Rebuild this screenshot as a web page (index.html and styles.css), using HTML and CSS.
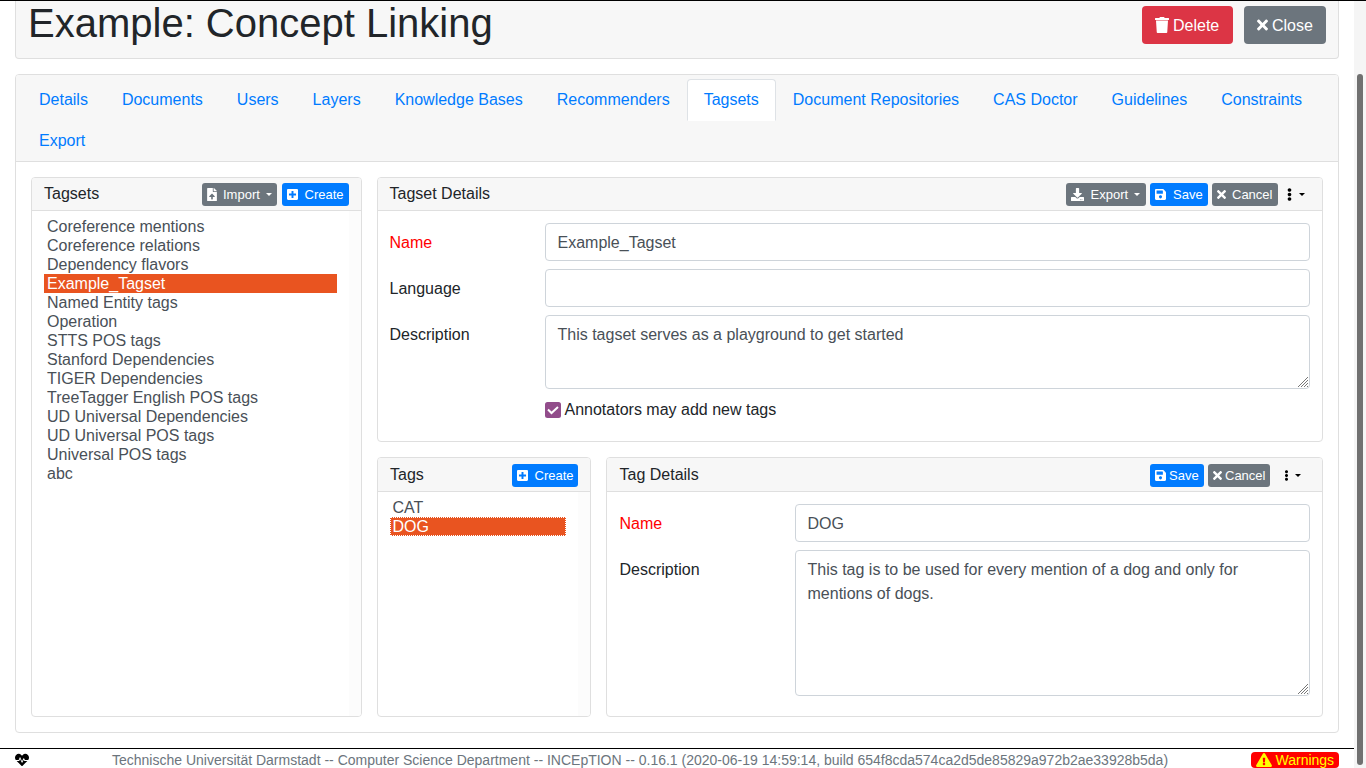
FILE: index.html
```html
<!DOCTYPE html>
<html lang="en">
<head>
<meta charset="utf-8">
<title>Example: Concept Linking</title>
<link rel="stylesheet" href="styles.css">
</head>
<body>
<svg class="sprite" aria-hidden="true">
  <symbol id="trash" viewBox="0 0 448 512"><path d="M432 32H312l-9.400-18.700A24 24 0 0 0 281.100 0H166.800a23.720 23.720 0 0 0-21.400 13.300L136 32H16A16 16 0 0 0 0 48v32a16 16 0 0 0 16 16h416a16 16 0 0 0 16-16V48a16 16 0 0 0-16-16zM32 112l24 376a26 26 0 0 0 26 24h284a26 26 0 0 0 26-24l24-376z"/></symbol>
  <symbol id="times" viewBox="0 0 352 512"><path d="M242.720 256l100.070-100.070c12.280-12.280 12.280-32.190 0-44.480l-22.240-22.240c-12.280-12.280-32.190-12.280-44.480 0L176 189.280 75.930 89.210c-12.280-12.280-32.190-12.280-44.480 0L9.210 111.450c-12.280 12.280-12.280 32.190 0 44.480L109.280 256 9.210 356.070c-12.280 12.280-12.280 32.190 0 44.480l22.240 22.240c12.280 12.280 32.200 12.280 44.480 0L176 322.720l100.070 100.070c12.280 12.280 32.200 12.280 44.480 0l22.240-22.240c12.280-12.280 12.280-32.190 0-44.480L242.720 256z"/></symbol>
  <symbol id="upload" viewBox="0 0 384 512"><path d="M224 136V0H24C10.700 0 0 10.700 0 24v464c0 13.300 10.700 24 24 24h336c13.300 0 24-10.700 24-24V160H248c-13.200 0-24-10.800-24-24zm65.180 216H224v80c0 8.840-7.160 16-16 16h-32c-8.840 0-16-7.160-16-16v-80H94.820c-14.280 0-21.410-17.290-11.270-27.360l96.420-95.700c6.650-6.610 17.390-6.610 24.040 0l96.420 95.700c10.150 10.070 3.030 27.360-11.250 27.360zM377 105L279.100 7c-4.500-4.500-10.600-7-17-7H256v128h128v-6.100c0-6.300-2.500-12.400-7-16.900z"/></symbol>
  <symbol id="plus" viewBox="0 0 448 512"><path d="M400 32H48C21.500 32 0 53.500 0 80v352c0 26.500 21.500 48 48 48h352c26.500 0 48-21.500 48-48V80c0-26.500-21.500-48-48-48zm-32 252c0 6.600-5.400 12-12 12h-92v92c0 6.600-5.400 12-12 12h-56c-6.600 0-12-5.400-12-12v-92H92c-6.600 0-12-5.400-12-12v-56c0-6.600 5.400-12 12-12h92v-92c0-6.600 5.400-12 12-12h56c6.600 0 12 5.400 12 12v92h92c6.600 0 12 5.400 12 12v56z"/></symbol>
  <symbol id="download" viewBox="0 0 512 512"><path d="M216 0h80c13.300 0 24 10.700 24 24v168h87.700c17.800 0 26.700 21.500 14.100 34.100L269.700 378.300c-7.500 7.500-19.800 7.500-27.300 0L90.100 226.100c-12.600-12.600-3.700-34.100 14.100-34.100H192V24c0-13.300 10.700-24 24-24zm296 376v112c0 13.300-10.700 24-24 24H24c-13.300 0-24-10.700-24-24V376c0-13.300 10.700-24 24-24h146.700l49 49c20.100 20.100 52.500 20.100 72.600 0l49-49H488c13.300 0 24 10.700 24 24zm-124 88c0-11-9-20-20-20s-20 9-20 20 9 20 20 20 20-9 20-20zm64 0c0-11-9-20-20-20s-20 9-20 20 9 20 20 20 20-9 20-20z"/></symbol>
  <symbol id="save" viewBox="0 0 448 512"><path d="M433.941 129.941l-83.882-83.882A48 48 0 0 0 316.118 32H48C21.490 32 0 53.490 0 80v352c0 26.510 21.490 48 48 48h352c26.510 0 48-21.490 48-48V163.882a48 48 0 0 0-14.059-33.941zM224 416c-35.346 0-64-28.654-64-64 0-35.346 28.654-64 64-64s64 28.654 64 64c0 35.346-28.654 64-64 64zm96-304.520V212c0 6.627-5.373 12-12 12H76c-6.627 0-12-5.373-12-12V108c0-6.627 5.373-12 12-12h228.520c3.183 0 6.235 1.264 8.485 3.515l3.480 3.480A11.996 11.996 0 0 1 320 111.480z"/></symbol>
  <symbol id="dots" viewBox="0 0 192 512"><path d="M96 184c39.800 0 72 32.200 72 72s-32.200 72-72 72-72-32.200-72-72 32.200-72 72-72zM24 80c0 39.800 32.200 72 72 72s72-32.200 72-72S135.800 8 96 8 24 40.200 24 80zm0 352c0 39.800 32.200 72 72 72s72-32.200 72-72-32.200-72-72-72-72 32.200-72 72z"/></symbol>
  <symbol id="heart" viewBox="0 0 512 512"><path d="M320.200 243.800l-49.700 99.400c-6 12.100-23.400 11.700-28.900-.6l-56.900-126.300-30 71.700H60.600l182.500 186.500c7.100 7.300 18.600 7.300 25.700 0L451.400 288H342.300l-22.100-44.200zM473.700 73.900l-2.400-2.500c-51.500-52.600-135.800-52.600-187.400 0L256 100l-27.900-28.500c-51.500-52.700-135.900-52.700-187.400 0l-2.400 2.400C-10.400 123.700-12.500 203 31 256h102.400l35.900-86.200c5.400-12.900 23.600-13.200 29.400-.4l58.200 129.300 49-97.900c5.900-11.800 22.700-11.800 28.600 0l27.600 55.200H481c43.500-53 41.400-132.300-7.300-182.100z"/></symbol>
  <symbol id="warn" viewBox="0 0 576 512"><path d="M569.517 440.013C587.975 472.007 564.806 512 527.940 512H48.054c-36.937 0-59.999-40.055-41.577-71.987L246.423 23.985c18.467-32.009 64.720-31.951 83.154 0l239.940 416.028zM288 354c-25.405 0-46 20.595-46 46s20.595 46 46 46 46-20.595 46-46-20.595-46-46-46zm-43.673-165.346l7.418 136c.347 6.364 5.609 11.346 11.982 11.346h48.546c6.373 0 11.635-4.982 11.982-11.346l7.418-136c.375-6.874-5.098-12.654-11.982-12.654h-63.383c-6.884 0-12.356 5.780-11.981 12.654z"/></symbol>
</svg>
<div class="window">
  <div class="page">
    <header class="title-bar">
      <h1>Example: Concept Linking</h1>
      <button class="btn danger"><svg class="i-trash"><use href="#trash"/></svg>Delete</button>
      <button class="btn gray close"><svg class="i-times"><use href="#times"/></svg>Close</button>
    </header>
    <main class="project">
      <nav class="tabs">
        <a>Details</a><a>Documents</a><a>Users</a><a>Layers</a><a>Knowledge Bases</a><a>Recommenders</a><a class="active">Tagsets</a><a>Document Repositories</a><a>CAS Doctor</a><a>Guidelines</a><a>Constraints</a><a>Export</a>
      </nav>
      <div class="content">
        <section class="panel tagsets">
          <div class="panel-head"><span>Tagsets</span>
            <div class="actions">
              <button class="sm gray import"><svg class="i-file"><use href="#upload"/></svg>Import<i class="caret"></i></button>
              <button class="sm blue create"><svg class="i-sq"><use href="#plus"/></svg>Create</button>
            </div>
          </div>
          <ul class="list">
            <li>Coreference mentions</li><li>Coreference relations</li><li>Dependency flavors</li><li class="selected">Example_Tagset</li><li>Named Entity tags</li><li>Operation</li><li>STTS POS tags</li><li>Stanford Dependencies</li><li>TIGER Dependencies</li><li>TreeTagger English POS tags</li><li>UD Universal Dependencies</li><li>UD Universal POS tags</li><li>Universal POS tags</li><li>abc</li>
          </ul>
        </section>
        <div class="right">
          <section class="panel details">
            <div class="panel-head"><span>Tagset Details</span>
              <div class="actions">
                <button class="sm gray export"><svg class="i-down"><use href="#download"/></svg>Export<i class="caret"></i></button>
                <button class="sm blue save"><svg class="i-sq"><use href="#save"/></svg>Save</button>
                <button class="sm gray cancel"><svg class="i-x"><use href="#times"/></svg>Cancel</button>
                <button class="sm more"><svg class="i-dots"><use href="#dots"/></svg><i class="caret"></i></button>
              </div>
            </div>
            <div class="form">
              <label class="required">Name</label><div class="field">Example_Tagset</div>
              <label>Language</label><div class="field"></div>
              <label>Description</label><div class="field area short">This tagset serves as a playground to get started<svg class="grip" viewBox="0 0 12 12"><path d="M1 11L11 1M4 11l7-7M7 11l4-4M10 11l1-1"/></svg></div>
              <div class="check"><svg viewBox="0 0 16 16"><rect width="16" height="16" rx="2.500"/><path d="M3 7.500l3.500 3.500 6.500-6"/></svg>Annotators may add new tags</div>
            </div>
          </section>
          <div class="lower">
            <section class="panel tags">
              <div class="panel-head"><span>Tags</span>
                <div class="actions"><button class="sm blue create narrow"><svg class="i-sq"><use href="#plus"/></svg>Create</button></div>
              </div>
              <ul class="list"><li>CAT</li><li class="selected focus">DOG</li></ul>
            </section>
            <section class="panel tag-details">
              <div class="panel-head"><span>Tag Details</span>
                <div class="actions">
                  <button class="sm blue save tight"><svg class="i-sq"><use href="#save"/></svg>Save</button>
                  <button class="sm gray cancel tight"><svg class="i-x"><use href="#times"/></svg>Cancel</button>
                  <button class="sm more tight"><svg class="i-dots"><use href="#dots"/></svg><i class="caret"></i></button>
                </div>
              </div>
              <div class="form">
                <label class="required">Name</label><div class="field">DOG</div>
                <label>Description</label><div class="field area tall">This tag is to be used for every mention of a dog and only for mentions of dogs.<svg class="grip" viewBox="0 0 12 12"><path d="M1 11L11 1M4 11l7-7M7 11l4-4M10 11l1-1"/></svg></div>
              </div>
            </section>
          </div>
        </div>
      </div>
    </main>
    <footer>
      <svg class="i-heart"><use href="#heart"/></svg>
      <span class="version">Technische Universität Darmstadt -- Computer Science Department -- INCEpTION -- 0.16.1 (2020-06-19 14:59:14, build 654f8cda574ca2d5de85829a972b2ae33928b5da)</span>
      <span class="warnings"><svg class="i-warn"><use href="#warn"/></svg>Warnings</span>
    </footer>
  </div>
  <div class="scroll"><div class="thumb"></div></div>
</div>
</body>
</html>
```
FILE: styles.css
```css
* { box-sizing: border-box; }
body { margin: 0; overflow: hidden; background: #fff; color: #212529; font: 16px/24px "Liberation Sans", Arial, sans-serif; }
svg { fill: currentColor; flex: none; }
.sprite { display: none; }
.window { display: flex; height: 768px; border-top: 1px solid #000; overflow: hidden; }
.page { width: 1354px; display: flex; flex-direction: column; }
.scroll { width: 12px; background: #f5f5f5; padding: 73px 3px 3px; }
.thumb { width: 6px; height: 691px; border-radius: 3px; background: #707070; }

.title-bar { height: 58px; margin: 0 15px; padding: 5px 12px 0 12px; display: flex; align-items: flex-start; background: #f7f7f7; border: 1px solid #dfdfdf; border-top: 0; border-radius: 0 0 4px 4px; }
h1 { margin: -7px auto 0 0; font-size: 40px; line-height: 48px; font-weight: 400; white-space: nowrap; }
button { border: 0; font-family: inherit; color: #fff; margin: 0; white-space: nowrap; display: flex; align-items: center; }
.btn { height: 38px; width: 91px; padding: 2px 0 0 12.500px; border-radius: 4px; font-size: 16px; }
.btn.close { width: 82px; margin-left: 11px; }
.btn svg { margin-top: -2px; }
.danger { background: #dc3545; }
.gray { background: #6c757d; }
.blue { background: #007bff; }
.i-trash { width: 14px; height: 16px; margin-right: 4.500px; }
.i-times { width: 11px; height: 16px; margin-right: 4.500px; }

.project { height: 659px; margin: 15px 15px 0; border: 1px solid #dfdfdf; border-radius: 4px; }
.tabs { height: 87px; display: flex; flex-wrap: wrap; align-content: flex-start; padding: 4px 6px 0; background: #f7f7f7; border-bottom: 1px solid #dfdfdf; border-radius: 3px 3px 0 0; }
.tabs a { height: 42px; margin-bottom: -1px; padding: 8px 16px; border: 1px solid transparent; border-radius: 4px 4px 0 0; color: #007bff; }
.tabs .active { background: #fff; border-color: #dee2e6 #dee2e6 #fff; color: #007bff; }

.content { display: flex; gap: 15px; padding: 15px; }
.panel { border: 1px solid #dfdfdf; border-radius: 4px; display: flex; flex-direction: column; }
.panel-head { height: 33px; padding: 0 12px; display: flex; align-items: center; justify-content: space-between; background: #f7f7f7; border-bottom: 1px solid #dfdfdf; border-radius: 3px 3px 0 0; }
.panel-head > span { line-height: 24px; margin-top: -1px; }
.lower .panel-head { height: 34px; }
.lower .panel-head > span { margin-top: 1px; }
.tag-details .panel-head > span { padding-left: 0.500px; }
.details .panel-head > span { margin-left: -0.500px; }
.tagsets { width: 331px; height: 540px; }
.right { width: 946px; display: flex; flex-direction: column; gap: 15px; }
.details { height: 265px; }
.lower { display: flex; gap: 15px; height: 260px; }
.tags { width: 214px; }
.tag-details { width: 717px; }
.actions { display: flex; gap: 4px; }

.sm { height: 23px; padding: 0 0 0 5px; border-radius: 3px; font-size: 13px; margin-top: 1px; }
.sm svg { height: 13px; }
.i-file { width: 10px; margin-right: 6px; }
.i-sq { width: 11px; margin-right: 7.500px; }
.i-down { width: 13px; margin-right: 7px; }
.i-x { width: 9px; margin-right: 6.500px; }
.i-dots { width: 5px; }
.caret { margin-left: 6px; border: 3.500px solid transparent; border-top-color: currentColor; border-bottom: 0; }
.import { width: 75px; margin-right: 1px; }
.create { width: 67px; }
.create.narrow { width: 66px; }
.create svg { margin-right: 6.500px; }
.export { width: 80px; }
.export, .save, .cancel { padding-left: 4.500px; }
.save { width: 58px; }
.cancel { width: 66px; }
.more { background: none; color: #000; width: 28px; padding-left: 1px; }
.more svg { margin-left: 4px; }
.more .caret { margin-left: 7px; }
.save.tight { width: 54px; }
.cancel.tight { width: 62px; }
.tight svg { margin-right: 3.500px; }
.more.tight { width: 36px; padding-left: 2px; }
.more.tight svg { height: 11px; margin: 0 0 0 7.500px; }
.more.tight .caret { margin-left: 6px; }

.list { flex: 1; margin: 0; list-style: none; padding: 6px 12px 0; border-right: 12px solid #fcfcfc; border-radius: 0 0 3px 0; color: #495057; line-height: 19px; }
.list li { padding-left: 3px; height: 19px; white-space: nowrap; }
.tags .list li { padding-left: 2.500px; }
.list .selected { background: #e95420; color: #fff; }
.list .focus { outline: 1px dotted #fff; outline-offset: -1px; }

.form { display: grid; grid-template-columns: 155.500px 765px; row-gap: 8px; padding: 12px 0 0 11.500px; }
.tag-details .form { grid-template-columns: 175.500px 515px; padding-left: 12.500px; }
.form label { padding-top: 8px; line-height: 24px; height: 32px; }
.form .required { color: #f00; }
.field { height: 38px; padding: 7px 12px 0 11.500px; border: 1px solid #ced4da; border-radius: 4px; color: #495057; }
.area { position: relative; }
.short { height: 74px; }
.tall { height: 146px; }
.grip { position: absolute; right: 0; bottom: 0; width: 12px; height: 12px; fill: none; stroke: #777; stroke-width: 1; }
.check { grid-column: 2; display: flex; align-items: center; gap: 3.500px; height: 24px; margin-top: 1px; }
.check svg { width: 16px; height: 16px; fill: #924d8b; }
.check path { fill: none; stroke: #fff; stroke-width: 2; }

footer { height: 20px; margin-top: 15px; border-top: 1px solid #000; display: flex; align-items: center; padding: 3px 15px 0; }
.i-heart { width: 14px; height: 14px; color: #000; }
.version { margin-left: 83px; font-size: 14px; color: #6c757d; white-space: nowrap; }
.warnings { margin-left: auto; width: 88px; height: 16px; padding-left: 4.500px; display: flex; align-items: center; gap: 4px; background: #f00; color: #ff0; border-radius: 4px; font-size: 14px; line-height: 16px; }
.i-warn { width: 16px; height: 14px; }
```
